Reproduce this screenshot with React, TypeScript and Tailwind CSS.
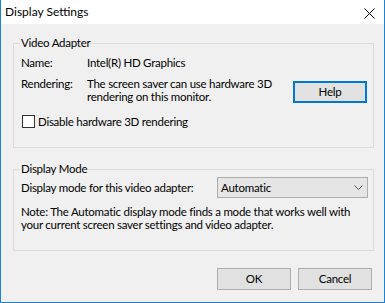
const font = { fontFamily: 'Lato, "Liberation Sans", Arial, sans-serif' };

const GroupBox = ({ title, className, children }: { title: string; className: string; children: React.ReactNode }) => (
  <div className={`relative border border-[#dcdcdc] ${className}`}>
    {/* caption sits over the top border line */}
    <span className="absolute left-[6px] top-[-9px] bg-[#f0f0f0] px-[1px] leading-[16px]">{title}</span>
    {children}
  </div>
);

const Button = ({ label, focused = false }: { label: string; focused?: boolean }) => (
  <button
    className={`w-[74px] h-[22px] bg-[#e1e1e1] leading-[16px] ${
      focused ? 'border-2 border-[#0078d7]' : 'border border-[#adadad]'
    }`}
  >
    {label}
  </button>
);

export default function App() {
  return (
    <div
      className="w-[385px] h-[303px] flex flex-col border-x border-b border-[#1883d7] bg-[#f0f0f0] text-[11.5px] tracking-[-0.25px] text-black whitespace-nowrap"
      style={font}
    >
      {/* Title bar */}
      <div className="h-[24px] flex items-start justify-between bg-white pt-[4px] pl-[4px] pr-[9px]">
        <span className="leading-[16px] text-[12px] tracking-normal">Display Settings</span>
        <svg width="11" height="11" viewBox="0 0 11 11" className="mt-[4px]">
          <path d="M0.5 0.5 L10.5 10.5 M10.5 0.5 L0.5 10.5" stroke="#000" strokeWidth="1" />
        </svg>
      </div>

      <div className="flex flex-col pl-[12px] pr-[10px]">
        {/* Video Adapter */}
        <GroupBox title="Video Adapter" className="mt-[19px] h-[105px] pt-[12px] pl-[7px] pr-[6px]">
          <div className="flex leading-[13px]">
            <span className="w-[66px]">Name:</span>
            <span>Intel(R) HD Graphics</span>
          </div>
          <div className="flex mt-[8px] leading-[13px]">
            <span className="w-[66px]">Rendering:</span>
            <span className="flex-1">
              The screen saver can use hardware 3D
              <br />
              rendering on this monitor.
            </span>
            <div className="mt-[4px]">
              <Button label="Help" focused />
            </div>
          </div>
          <label className="flex items-center mt-[12px] leading-[13px] pl-[1px]">
            <span className="w-[13px] h-[13px] border border-[#333] bg-white" />
            <span className="ml-[3px]">Disable hardware 3D rendering</span>
          </label>
        </GroupBox>

        {/* Display Mode */}
        <GroupBox title="Display Mode" className="mt-[21px] h-[82px] pt-[7px] pl-[7px] pr-[5px]">
          <div className="flex items-center">
            <span className="w-[196px] leading-[13px]">Display mode for this video adapter:</span>
            <div className="w-[151px] h-[21px] flex items-center justify-between border border-[#adadad] bg-[#e5e5e5] pl-[3px] pr-[4px]">
              <span className="leading-[13px]">Automatic</span>
              <svg width="9" height="5" viewBox="0 0 9 5">
                <path d="M0.5 0.5 L4.5 4.5 L8.5 0.5" stroke="#555" strokeWidth="1" fill="none" />
              </svg>
            </div>
          </div>
          <p className="mt-[7px] leading-[13px]">
            Note: The Automatic display mode finds a mode that works well with
            <br />
            your current screen saver settings and video adapter.
          </p>
        </GroupBox>

        {/* Dialog buttons */}
        <div className="flex justify-end gap-[7px] mt-[17px] pr-[2px]">
          <Button label="OK" />
          <Button label="Cancel" />
        </div>
      </div>
    </div>
  );
}
